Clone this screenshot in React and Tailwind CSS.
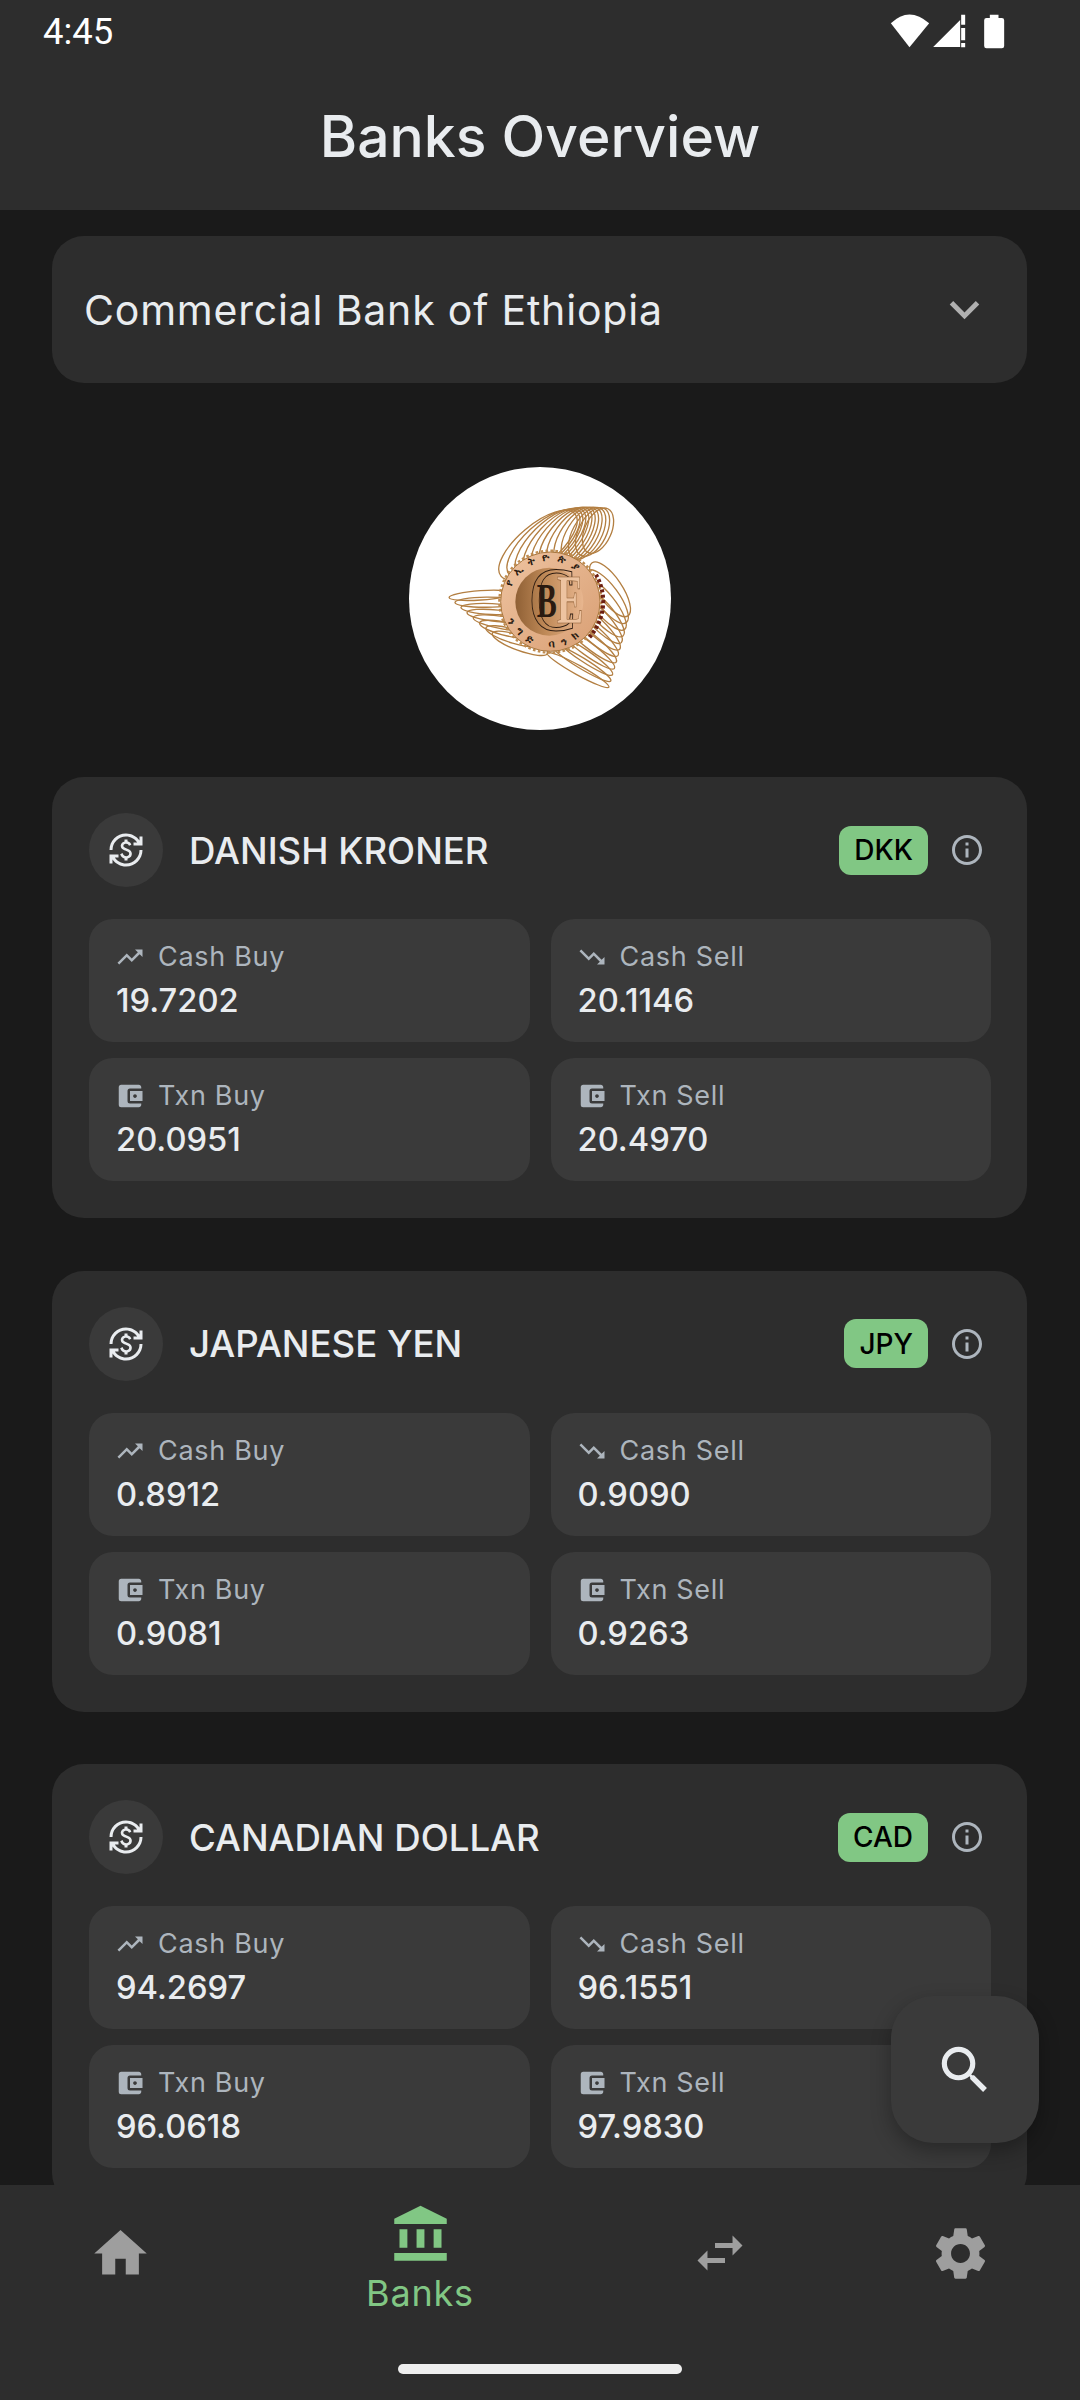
import React from 'react';
import {
  MdAccountBalance,
  MdAccountBalanceWallet,
  MdCurrencyExchange,
  MdHome,
  MdInfoOutline,
  MdKeyboardArrowDown,
  MdSearch,
  MdSettings,
  MdSwapHoriz,
  MdTrendingDown,
  MdTrendingUp,
} from 'react-icons/md';

const currencies = [
  { name: 'DANISH KRONER', code: 'DKK', cashBuy: '19.7202', cashSell: '20.1146', txnBuy: '20.0951', txnSell: '20.4970' },
  { name: 'JAPANESE YEN', code: 'JPY', cashBuy: '0.8912', cashSell: '0.9090', txnBuy: '0.9081', txnSell: '0.9263' },
  { name: 'CANADIAN DOLLAR', code: 'CAD', cashBuy: '94.2697', cashSell: '96.1551', txnBuy: '96.0618', txnSell: '97.9830' },
];

const lerp = (a, b, t) => a + (b - a) * t;

// one fan of wire loops for the logo, interpolated between two ellipses
const Fan = ({ count, from, to }) => (
  <g fill="none" stroke="#b37f42" strokeWidth="4">
    {Array.from({ length: count }).map((_, i) => {
      const t = i / (count - 1);
      const cx = lerp(from.cx, to.cx, t);
      const cy = lerp(from.cy, to.cy, t);
      return (
        <ellipse
          key={i}
          cx={cx}
          cy={cy}
          rx={lerp(from.rx, to.rx, t)}
          ry={lerp(from.ry, to.ry, t)}
          transform={`rotate(${lerp(from.rot, to.rot, t)} ${cx} ${cy})`}
        />
      );
    })}
  </g>
);

const BankLogo = () => (
  <svg viewBox="-93 -99 789 789" className="w-[263px] h-[263px] shrink-0">
    <defs>
      <linearGradient id="coinFace" x1="0" y1="0" x2="1" y2="1">
        <stop offset="0" stopColor="#eec3a0" />
        <stop offset="1" stopColor="#d99f74" />
      </linearGradient>
      <linearGradient id="coinInner" x1="0" y1="0" x2="1" y2="0">
        <stop offset="0" stopColor="#8f6035" />
        <stop offset="0.45" stopColor="#c08a58" />
        <stop offset="1" stopColor="#e8b68f" />
      </linearGradient>
      <path id="coinTop" d="M 214 262 A 122 122 0 0 1 442 262" />
      <path id="coinBottom" d="M 203 363 A 138 138 0 0 0 453 363" />
    </defs>
    <Fan count={12} from={{ cx: 294, cy: 135, rx: 145, ry: 60, rot: -40 }} to={{ cx: 474, cy: 92, rx: 72, ry: 40, rot: -66 }} />
    <Fan count={8} from={{ cx: 122, cy: 286, rx: 95, ry: 14, rot: -4 }} to={{ cx: 240, cy: 430, rx: 88, ry: 22, rot: 20 }} />
    <Fan count={12} from={{ cx: 510, cy: 268, rx: 96, ry: 36, rot: 56 }} to={{ cx: 414, cy: 510, rx: 106, ry: 14, rot: 29 }} />
    <circle cx="331" cy="305" r="153" fill="none" stroke="#c08c50" strokeWidth="7" strokeDasharray="8 7" />
    <path d="M 468 224 A 160 160 0 0 1 448 412" fill="none" stroke="#6b1f12" strokeWidth="12" strokeDasharray="9 7" />
    <circle cx="331" cy="305" r="149" fill="url(#coinFace)" stroke="#a8773f" strokeWidth="3" />
    <circle cx="328" cy="305" r="102" fill="url(#coinInner)" />
    <text fontFamily="'Noto Sans', 'DejaVu Sans', sans-serif" fontWeight="700" fontSize="32" fill="#2a1a10">
      <textPath href="#coinTop" letterSpacing="22">የኢትዮጵያ</textPath>
      <textPath href="#coinBottom" letterSpacing="22">ንግድ ባንክ</textPath>
      <tspan x="267" y="390" textLength="143" lengthAdjust="spacingAndGlyphs" fontFamily="'Liberation Serif', serif" fontWeight="400" fontSize="270" fill="none" stroke="#2a1a10" strokeWidth="3">C</tspan>
      <tspan x="290" y="350" textLength="60" lengthAdjust="spacingAndGlyphs" fontFamily="'Liberation Serif', serif" fontSize="144">B</tspan>
      <tspan x="350" y="370" textLength="80" lengthAdjust="spacingAndGlyphs" fontFamily="'Liberation Serif', serif" fontSize="212" fill="#edc3a0" stroke="#8a5a30" strokeWidth="2">E</tspan>
    </text>
  </svg>
);

const StatusIcons = () => (
  <svg viewBox="90 40 350 105" className="w-[117px] h-[35px]" fill="#fff">
    <path d="M95 68 Q150 15 210 68 L151 140 Z" />
    <path d="M222 139 L303 58 V139 Z M306 42 L318 42 V72 H306 Z" />
    <path d="M306 82 H318 V119 H306 Z M306 127 H318 V140 H306 Z" />
    <path d="M392 42 H418 V52 H428 Q435 52 435 59 V136 Q435 143 428 143 H382 Q375 143 375 136 V59 Q375 52 382 52 H392 Z" />
  </svg>
);

const RateTile = ({ icon: Icon, label, value }) => (
  <div className="h-[123px] rounded-[24px] bg-[#3a3a3a] pl-[26px] pt-[22px]">
    <div className="flex items-center h-[32px]">
      <Icon size={30} color="#adb5bd" />
      <span className="ml-[13px] text-[27px] leading-[32px] tracking-[0.7px] text-[#adb5bd]">{label}</span>
    </div>
    <div className="mt-[7px] ml-[1px] text-[32.7px] leading-[40px] font-medium text-[#e9ecef]">{value}</div>
  </div>
);

const CurrencyCard = ({ item }) => (
  <div className="h-[441px] shrink-0 rounded-[32px] bg-[#2d2d2d] pl-[37px] pr-[36px] pt-[36px]">
    <div className="flex items-center h-[74px]">
      <div className="flex items-center justify-center w-[74px] h-[74px] rounded-full bg-[#3a3a3a]">
        <MdCurrencyExchange size={36} color="#e9ecef" />
      </div>
      <div className="ml-[26px] mt-[1px] flex-1 text-[36.6px] leading-[44px] font-medium text-[#e9ecef]">{item.name}</div>
      <div className="flex items-center h-[49px] px-[15px] rounded-[12px] bg-[#81c784] text-[28px] font-medium text-black">{item.code}</div>
      <MdInfoOutline size={36} color="#adb5bd" className="ml-[21px] mr-[6px]" />
    </div>
    <div className="grid grid-cols-2 gap-x-[21px] gap-y-[16px] mt-[32px]">
      <RateTile icon={MdTrendingUp} label="Cash Buy" value={item.cashBuy} />
      <RateTile icon={MdTrendingDown} label="Cash Sell" value={item.cashSell} />
      <RateTile icon={MdAccountBalanceWallet} label="Txn Buy" value={item.txnBuy} />
      <RateTile icon={MdAccountBalanceWallet} label="Txn Sell" value={item.txnSell} />
    </div>
  </div>
);

export default function App() {
  return (
    <div className="relative flex flex-col w-[1080px] h-[2400px] overflow-hidden bg-[#1a1a1a] font-['Inter',sans-serif]">
      <header className="h-[210px] shrink-0 bg-[#2d2d2d]">
        <div className="flex items-center justify-between h-[62px] pl-[43px] pr-[74px]">
          <span className="mt-[2px] font-['Roboto',sans-serif] text-[36.5px] text-white">4:45</span>
          <StatusIcons />
        </div>
        <h1 className="flex items-center justify-center h-[150px] text-[57px] font-medium text-[#e9ecef]">Banks Overview</h1>
      </header>

      <main className="flex-1 overflow-hidden pl-[52px] pr-[53px] pt-[26px]">
        <div className="flex items-center justify-between h-[147px] pl-[32px] pr-[33px] rounded-[32px] bg-[#2d2d2d]">
          <span className="mt-[2px] text-[41px] tracking-[0.8px] text-[#e9ecef]">Commercial Bank of Ethiopia</span>
          <MdKeyboardArrowDown size={59} color="#b0b0b0" />
        </div>

        <div className="flex mt-[84px] mx-auto w-[262px] h-[263px] rounded-full bg-white overflow-hidden">
          <BankLogo />
        </div>

        <div className="flex flex-col gap-[52.5px] mt-[47px]">
          {currencies.map((item) => (
            <CurrencyCard key={item.code} item={item} />
          ))}
        </div>
      </main>

      <nav className="h-[215px] shrink-0 bg-[#2d2d2d]">
        <div className="grid grid-cols-[240px_360px_240px_240px] h-[136px]">
          <div className="flex items-center justify-center">
            <MdHome size={63} color="#9e9e9e" />
          </div>
          <div className="flex flex-col items-center pt-[18px]">
            <MdAccountBalance size={63} color="#81c784" />
            <span className="mt-[5px] text-[36px] leading-[44px] tracking-[0.8px] text-[#81c784]">Banks</span>
          </div>
          <div className="flex items-center justify-center">
            <MdSwapHoriz size={60} color="#9e9e9e" />
          </div>
          <div className="flex items-center justify-center">
            <MdSettings size={63} color="#9e9e9e" />
          </div>
        </div>
        <div className="mt-[43px] mx-auto w-[284px] h-[10px] rounded-full bg-[#eeeeee]" />
      </nav>

      <button className="absolute left-[891px] top-[1996px] flex items-center justify-center w-[148px] h-[147px] rounded-[42px] bg-[#3a3a3a] shadow-[0_8px_20px_rgba(0,0,0,0.3)]">
        <MdSearch size={62} color="#e9ecef" />
      </button>
    </div>
  );
}
